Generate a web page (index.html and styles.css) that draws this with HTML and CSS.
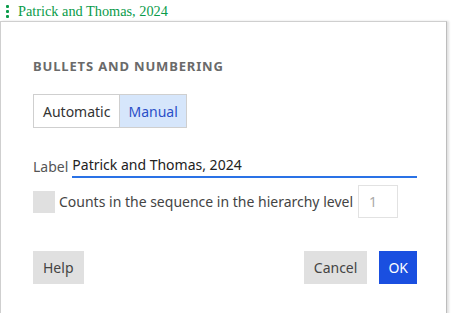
FILE: index.html
```html
<!DOCTYPE html>
<html>
<head>
<meta charset="utf-8">
<link rel="stylesheet" href="styles.css">
</head>
<body>
<div class="cite">
  <span class="dots"><i></i><i></i><i></i></span>
  <span class="cite-text">Patrick and Thomas, 2024</span>
</div>
<div class="dialog">
  <h2 class="title">BULLETS AND NUMBERING</h2>
  <div class="segmented">
    <button class="seg">Automatic</button>
    <button class="seg active">Manual</button>
  </div>
  <div class="label-row">
    <span class="label">Label</span>
    <span class="field">Patrick and Thomas, 2024</span>
  </div>
  <div class="check-row">
    <span class="checkbox"></span>
    <span class="check-text">Counts in the sequence in the hierarchy level</span>
    <span class="num">1</span>
  </div>
  <div class="actions">
    <button class="btn">Help</button>
    <span class="spacer"></span>
    <button class="btn">Cancel</button>
    <button class="btn primary">OK</button>
  </div>
</div>
</body>
</html>
```
FILE: styles.css
```css
html, body { margin: 0; padding: 0; background: #fff; }
body { width: 452px; height: 313px; overflow: hidden; font-family: "Noto Sans", sans-serif; }
.cite { height: 21px; display: flex; align-items: flex-end; padding-left: 6px; box-sizing: border-box; }
.dots { display: flex; flex-direction: column; gap: 2px; width: 3px; margin-right: 9px; margin-bottom: 3px; }
.dots i { display: block; width: 3px; height: 3px; background: #0a9b4a; border-radius: 1px; }
.cite-text { font-family: "Liberation Serif", serif; font-size: 14.3px; color: #0a9b4a; line-height: 19px; }
.dialog { width: 384px; padding: 35px 29px 40px 32px; border: 1px solid #cfcfcf; border-right-color: #bdbdbd; box-shadow: 2px 0 2px rgba(0,0,0,0.12); }
.title { margin: 0; font-size: 13px; font-weight: 700; letter-spacing: 0.85px; color: #6a6a6a; line-height: 18px; }
.segmented { display: flex; margin-top: 19px; }
.seg { font-family: inherit; font-size: 14px; height: 34px; padding: 0 9px; border: 1px solid #cfcfcf; background: #fff; color: #333; margin: 0; }
.seg.active { background: #d6e6fb; color: #2a4fc8; border-left: 0; padding: 0 8px; }
.label-row { display: flex; align-items: flex-end; margin-top: 26px; }
.label { font-size: 14px; color: #555; margin-right: 4px; line-height: 22px; }
.field { flex: 1; font-size: 14px; color: #222; border-bottom: 2px solid #2a72e6; line-height: 22px; }
.check-row { display: flex; align-items: center; margin-top: 7px; }
.checkbox { width: 22px; height: 22px; background: #e0e0e0; margin-right: 4px; }
.check-text { font-size: 14px; color: #444; }
.num { width: 40px; height: 33px; border: 1px solid #e2e2e2; margin-left: 5px; font-size: 14px; color: #aaa; padding-left: 10px; box-sizing: border-box; line-height: 31px; }
.actions { display: flex; margin-top: 33px; gap: 12px; }
.spacer { flex: 1; }
.btn { font-family: inherit; font-size: 14px; height: 33px; padding: 0 10px; border: 0; background: #e0e0e0; color: #444; margin: 0; }
.btn.primary { background: #1a4fe0; color: #fff; padding: 0 9px; }
```
